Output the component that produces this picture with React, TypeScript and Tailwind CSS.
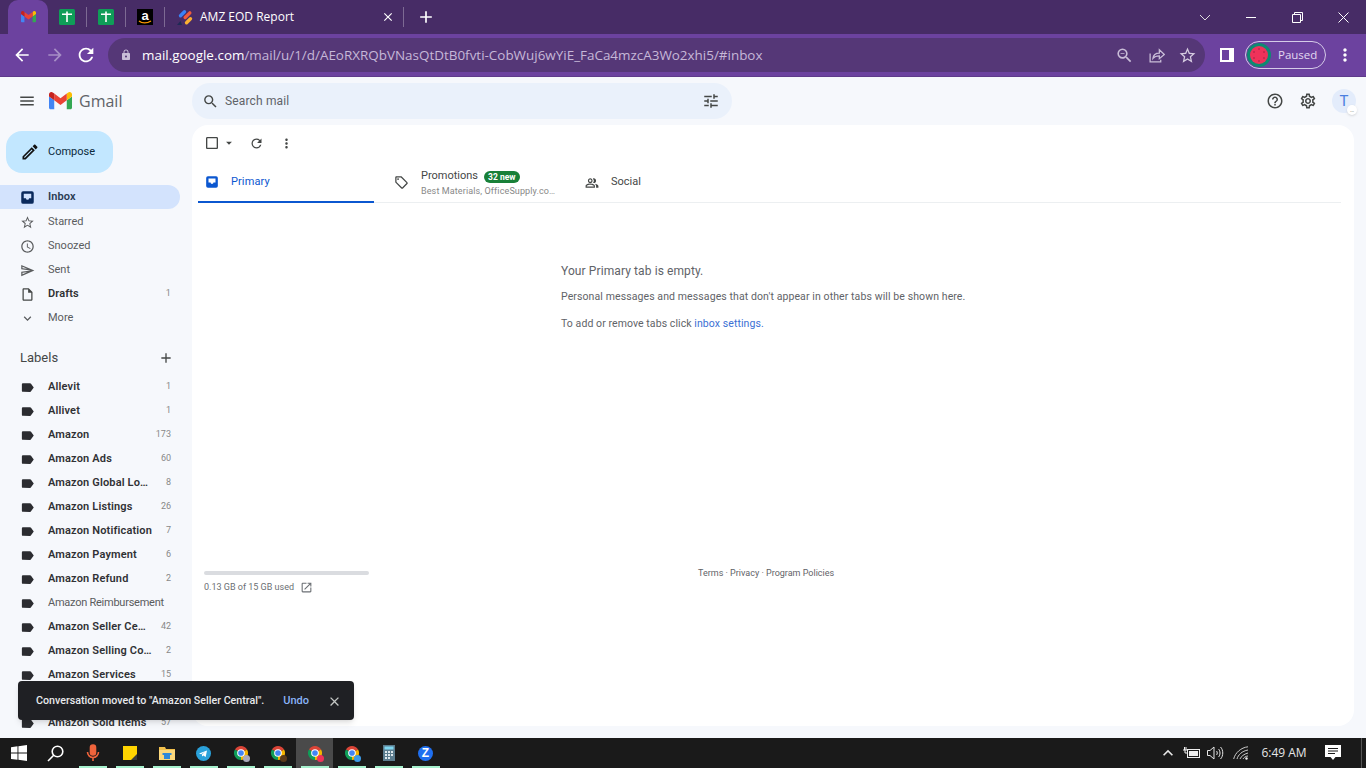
import React from "react";
import {
  MdMenu, MdSearch, MdTune, MdHelpOutline, MdOutlineSettings, MdStarBorder, MdAccessTime,
  MdOutlineSend, MdOutlineInsertDriveFile, MdExpandMore, MdAdd, MdLabel, MdCheckBoxOutlineBlank,
  MdArrowDropDown, MdRefresh, MdMoreVert, MdOutlineLocalOffer, MdOutlinePeopleAlt, MdOpenInNew,
  MdClose, MdOutlineEdit, MdLock, MdArrowBack, MdArrowForward, MdOutlineZoomOut,
  MdKeyboardArrowUp,
} from "react-icons/md";

function GmailLogo({ size }: { size: number }) {
  return (
    <svg width={size} height={(size * 66) / 88} viewBox="52 42 88 66">
      <path fill="#4285f4" d="M58 108h14V74L52 59v43c0 3.32 2.69 6 6 6" />
      <path fill="#34a853" d="M120 108h14c3.32 0 6-2.69 6-6V59l-20 15" />
      <path fill="#fbbc04" d="M120 48v26l20-15v-8c0-7.42-8.47-11.65-14.4-7.2" />
      <path fill="#ea4335" d="M72 74V48l24 18 24-18v26L96 92" />
      <path fill="#c5221f" d="M52 51v8l20 15V48l-5.6-4.2c-5.94-4.45-14.4-.22-14.4 7.2" />
    </svg>
  );
}

function InboxIcon({ size, color }: { size: number; color: string }) {
  return (
    <svg width={size} height={size} viewBox="0 0 24 24">
      <path
        fill={color}
        fillRule="evenodd"
        d="M5 2h14a3 3 0 0 1 3 3v14a3 3 0 0 1-3 3H5a3 3 0 0 1-3-3V5a3 3 0 0 1 3-3zM6 6v7h3.500a2.500 2.500 0 0 0 5 0H18V6z"
      />
    </svg>
  );
}

function ShareIcon() {
  return (
    <svg width="17" height="17" viewBox="0 0 24 24" fill="none" stroke="#c9bdd8" strokeWidth="1.8">
      <path d="M3 9v12h15v-3M7 16c.5-5 4-7.500 9-7.500V4l7 6.500-7 6V12.500c-4 0-7 1-9 3.500z" />
    </svg>
  );
}

function SheetIcon() {
  return (
    <svg width="16" height="16" viewBox="0 0 16 16">
      <rect width="16" height="16" rx="1.5" fill="#0f9d58" />
      <path d="M3 4.500h4.200V2.500h1.600v2H13v1.600H8.800V13H7.200V6.100H3z" fill="#fff" />
    </svg>
  );
}

function AmazonIcon() {
  return (
    <div className="relative flex h-4 w-4 items-start justify-center bg-black">
      <span className="font-['Liberation_Sans',sans-serif] text-[13px] leading-[13px] font-bold text-white">a</span>
      <svg className="absolute bottom-0 left-0" width="16" height="5" viewBox="0 0 16 5">
        <path d="M2 1c3 2.400 8 2.400 12 0" stroke="#f90" strokeWidth="1.4" fill="none" />
      </svg>
    </div>
  );
}

function EodIcon() {
  return (
    <svg width="17" height="17" viewBox="0 0 17 17">
      <rect x="2" y="3" width="9" height="3.400" rx="1.700" transform="rotate(-45 6.500 4.700)" fill="#3b82f6" />
      <rect x="6.500" y="4.500" width="10" height="3.400" rx="1.700" transform="rotate(-45 11.500 6.200)" fill="#ef5a3c" />
      <rect x="8" y="10" width="9" height="3.400" rx="1.700" transform="rotate(-45 12.500 11.700)" fill="#fbb131" />
      <path d="M1 16l3.500-4 1.500 4z" fill="#1e2a55" />
    </svg>
  );
}

function ChromeIcon({ dot }: { dot?: string }) {
  return (
    <div className="relative h-4 w-4">
      <svg width="16" height="16" viewBox="0 0 48 48">
        <path d="M24 24L5.800 13.500A21 21 0 0 1 42.200 13.500z" fill="#db4437" />
        <path d="M24 24L42.200 13.500A21 21 0 0 1 24 45z" fill="#f4b400" />
        <path d="M24 24L24 45A21 21 0 0 1 5.800 13.500z" fill="#0f9d58" />
        <circle cx="24" cy="24" r="11.500" fill="#fff" />
        <circle cx="24" cy="24" r="8.500" fill="#4285f4" />
      </svg>
      {dot ? <span className="absolute -right-[1px] -bottom-[1px] h-[7px] w-[7px] rounded-full" style={{ background: dot }} /> : null}
    </div>
  );
}

function Separator() {
  return <div className="h-[20px] w-px bg-[#7d6a93]" />;
}

function TabStrip() {
  return (
    <div className="flex h-[34px] shrink-0 items-center bg-[#472c66] pl-2 text-white">
      <div className="flex h-[34px] w-[40px] items-center justify-center rounded-t-[10px] bg-[#6c429f]">
        <GmailLogo size={15} />
      </div>
      <div className="flex w-[38px] justify-center"><SheetIcon /></div>
      <Separator />
      <div className="flex w-[38px] justify-center"><SheetIcon /></div>
      <Separator />
      <div className="flex w-[38px] justify-center"><AmazonIcon /></div>
      <Separator />
      <div className="flex w-[238px] items-center pl-[11px]">
        <EodIcon />
        <span className="ml-[7px] flex-1 font-['Open_Sans',sans-serif] text-[12px] text-white">AMZ EOD Report</span>
        <MdClose size={14} className="mr-[8px]" />
      </div>
      <Separator />
      <MdAdd size={20} className="ml-[12px] text-white" />
      <div className="flex-1" />
      <div className="flex items-center text-white">
        <div className="flex w-[46px] justify-center"><svg width="12" height="7" viewBox="0 0 12 7"><path d="M1 1l5 5 5-5" stroke="#ddd" fill="none" /></svg></div>
        <div className="flex w-[46px] justify-center"><div className="h-px w-[10px] bg-white" /></div>
        <div className="flex w-[46px] justify-center">
          <svg width="11" height="11" viewBox="0 0 11 11"><path d="M.5 2.500h8v8h-8zM2.500 2.500v-2h8v8h-2" fill="none" stroke="#fff" /></svg>
        </div>
        <div className="flex w-[46px] justify-center"><svg width="11" height="11" viewBox="0 0 11 11"><path d="M.5.5l10 10M10.500.5l-10 10" stroke="#fff" /></svg></div>
      </div>
    </div>
  );
}

function Watermelon() {
  return (
    <svg width="24" height="24" viewBox="0 0 24 24">
      <circle cx="12" cy="12" r="12" fill="#0d8a72" />
      <circle cx="12" cy="12" r="9" fill="#f0325a" />
      <g fill="#8f1a3c">
        <circle cx="12" cy="6" r=".7" /><circle cx="17" cy="9" r=".7" /><circle cx="17" cy="15" r=".7" />
        <circle cx="12" cy="18" r=".7" /><circle cx="7" cy="15" r=".7" /><circle cx="7" cy="9" r=".7" />
      </g>
    </svg>
  );
}

function Toolbar() {
  return (
    <div className="flex h-[43px] shrink-0 items-center border-b border-[#5e3a8a] bg-[#6c429f] pl-[12px]">
      <MdArrowBack size={20} className="text-white" />
      <MdArrowForward size={20} className="ml-[13px] text-[#a78fc6]" />
      <MdRefresh size={22} className="ml-[10px] text-white" />
      <div className="ml-[11px] flex h-[34px] w-[1097px] items-center rounded-full bg-[#553777] pl-[12px] pr-[8px]">
        <MdLock size={12} className="text-[#c9bdd8]" />
        <span className="ml-[10px] flex-1 truncate font-['Open_Sans',sans-serif] text-[13.45px] text-[#c6b8d8]">
          <span className="text-white">mail.google.com</span>/mail/u/1/d/AEoRXRQbVNasQtDtB0fvti-CobWuj6wYiE_FaCa4mzcA3Wo2xhi5/#inbox
        </span>
        <MdOutlineZoomOut size={19} className="-ml-[2px] text-[#c9bdd8]" />
        <div className="ml-[14px]"><ShareIcon /></div>
        <MdStarBorder size={19} className="ml-[13px] text-[#d5cbe0]" />
      </div>
      <div className="ml-[15px] flex h-[14px] w-[14px] items-center justify-start border-[2px] border-white bg-[#6c429f] pl-0">
        <div className="h-full w-[7px] bg-[#6c429f]" />
        <div className="h-full w-[3px] bg-white" />
      </div>
      <div className="ml-[11px] flex h-[28px] w-[81px] items-center rounded-full border border-[#d5cbe8] pl-px">
        <Watermelon />
        <span className="ml-[7px] font-['Open_Sans',sans-serif] text-[11.5px] text-[#e2d8f0]">Paused</span>
      </div>
      <MdMoreVert size={20} className="ml-[9px] text-white" />
    </div>
  );
}

const NAV = [
  { Icon: MdStarBorder, label: "Starred" },
  { Icon: MdAccessTime, label: "Snoozed" },
  { Icon: MdOutlineSend, label: "Sent" },
];

const LABELS: [string, string, boolean?][] = [
  ["Allevit", "1"],
  ["Allivet", "1"],
  ["Amazon", "173"],
  ["Amazon Ads", "60"],
  ["Amazon Global Lo…", "8"],
  ["Amazon Listings", "26"],
  ["Amazon Notification", "7"],
  ["Amazon Payment", "6"],
  ["Amazon Refund", "2"],
  ["Amazon Reimbursement", "", true],
  ["Amazon Seller Ce…", "42"],
  ["Amazon Selling Co…", "2"],
  ["Amazon Services", "15"],
  ["Amazon Sold Items", "57"],
];

function Sidebar() {
  return (
    <div className="h-full w-[192px] shrink-0 overflow-hidden">
      <div className="ml-[6px] mt-[6px] flex h-[42px] w-[107px] items-center rounded-2xl bg-[#c2e7ff] pl-[14px] text-[#0b2a3c]">
        <MdOutlineEdit size={20} className="text-[#111]" />
        <span className="ml-[8px] text-[11px]">Compose</span>
      </div>
      <div className="mt-[12px] flex h-[24px] w-[180px] items-center rounded-r-full bg-[#d3e3fd] pl-[20px] pt-px text-[11px] font-semibold tracking-[.1px] text-[#2a3a52]">
        <InboxIcon size={15} color="#0b2a5c" />
        <span className="ml-[13px]">Inbox</span>
      </div>
      {NAV.map(({ Icon, label }) => (
        <div key={label} className="flex h-[24px] items-center pl-[20px] pt-[2px] text-[11px] text-[#5a5c5e]">
          <Icon size={15} />
          <span className="ml-[13px]">{label}</span>
        </div>
      ))}
      <div className="flex h-[24px] w-[180px] items-center pl-[20px] pr-[9px] pt-[2px] text-[11px] font-semibold tracking-[.1px] text-[#303134]">
        <MdOutlineInsertDriveFile size={15} className="text-[#444746]" />
        <span className="ml-[13px] flex-1">Drafts</span>
        <span className="text-[9px] font-normal text-[#888]">1</span>
      </div>
      <div className="flex h-[24px] items-center pl-[20px] pt-[2px] text-[11px] text-[#5a5c5e]">
        <MdExpandMore size={15} />
        <span className="ml-[13px]">More</span>
      </div>
      <div className="mt-[17px] flex h-[24px] w-[180px] items-center justify-between pl-[20px] pr-[6px] text-[13px] text-[#444746]">
        <span>Labels</span>
        <MdAdd size={16} />
      </div>
      <div className="mt-[5px]">
        {LABELS.map(([name, count, plain]) => (
          <React.Fragment key={name}>
            {name === "Amazon Sold Items" ? <div className="h-[24px]" /> : null}
            <div className="flex h-[24px] w-[180px] items-center pl-[20px] pr-[9px] text-[11px] text-[#303134]">
              <MdLabel size={15} className="text-[#2b2c30]" />
              <span className={"ml-[13px] flex-1 whitespace-nowrap " + (plain ? "font-normal tracking-[-.25px] text-[#5a5c5e]" : "font-semibold tracking-[.15px]")}>{name}</span>
              <span className="text-[9px] text-[#888]">{count}</span>
            </div>
          </React.Fragment>
        ))}
      </div>
    </div>
  );
}

function MainPanel() {
  return (
    <div className="mb-[12px] mr-[12px] mt-0 flex flex-1 flex-col rounded-2xl bg-white pl-[6px] pr-[13px]">
      <div className="flex h-[36px] shrink-0 items-center pl-[6px] text-[#444746]">
        <MdCheckBoxOutlineBlank size={16} />
        <MdArrowDropDown size={14} className="ml-[2px]" />
        <MdRefresh size={15} className="ml-[13px]" />
        <MdMoreVert size={15} className="ml-[15px]" />
      </div>
      <div className="flex h-[42px] shrink-0 border-b border-[#eceff1]">
        <div className="flex h-[42px] w-[176px] items-center border-b-[2px] border-[#0b57d0] pl-[7px] pt-[2px] text-[11px] tracking-[.1px] text-[#0b57d0]">
          <InboxIcon size={14} color="#0b57d0" />
          <span className="ml-[12px]">Primary</span>
        </div>
        <div className="flex w-[191px] items-center pl-[20px] pt-[2px] text-[#444746]">
          <MdOutlineLocalOffer size={15} />
          <div className="ml-[12px]">
            <div className="flex items-center text-[11px]">
              <span>Promotions</span>
              <span className="ml-[6px] rounded-full bg-[#188038] px-[4px] text-[8.5px] leading-[12px] font-bold text-white">32 new</span>
            </div>
            <div className="mt-[1px] text-[9px] leading-[11px] tracking-[.12px] text-[#888]">Best Materials, OfficeSupply.co…</div>
          </div>
        </div>
        <div className="flex items-center pl-[20px] pt-[2px] text-[11px] text-[#444746]">
          <MdOutlinePeopleAlt size={14} />
          <span className="ml-[12px]">Social</span>
        </div>
      </div>
      <div className="ml-[363px] mt-[60px] text-[#5f6368]">
        <div className="text-[12px] leading-[16px] tracking-[.1px]">Your Primary tab is empty.</div>
        <div className="mt-[11px] text-[10.5px] leading-[14px] tracking-[.1px]">Personal messages and messages that don't appear in other tabs will be shown here.</div>
        <div className="mt-[13px] text-[10.5px] leading-[14px] tracking-[.08px]">To add or remove tabs click <span className="text-[#3b6fd4]">inbox settings.</span></div>
      </div>
      <div className="mt-[240px] flex pl-[6px]">
        <div className="w-[165px]">
          <div className="h-[4px] rounded-full bg-[#dadce0]" />
          <div className="mt-[6px] flex items-center text-[9px] text-[#6b6f74]">
            <span>0.13 GB of 15 GB used</span>
            <MdOpenInNew size={13} className="ml-[6px]" />
          </div>
        </div>
        <div className="ml-[329px] -mt-[4px] text-[9px] text-[#5f6368]">Terms · Privacy · Program Policies</div>
      </div>
    </div>
  );
}

function Gmail() {
  return (
    <div className="relative flex min-h-0 flex-1 flex-col overflow-hidden bg-[#f6f8fc] font-['Roboto',sans-serif]">
      <div className="flex h-[48px] shrink-0 items-center">
        <div className="flex w-[192px] items-center pl-[18px]">
          <MdMenu size={18} className="text-[#444746]" />
          <div className="ml-[13px]"><GmailLogo size={23} /></div>
          <span className="ml-[7px] font-['Open_Sans',sans-serif] text-[16px] text-[#5f6368]">Gmail</span>
        </div>
        <div className="flex h-[36px] w-[540px] items-center rounded-full bg-[#eaf1fb] pl-[10px] pr-[12px] text-[#444746]">
          <MdSearch size={17} />
          <span className="ml-[6px] flex-1 text-[12px] tracking-[.15px] text-[#5f6368]">Search mail</span>
          <MdTune size={18} />
        </div>
        <div className="flex-1" />
        <MdHelpOutline size={18} className="text-[#444746]" />
        <MdOutlineSettings size={18} className="ml-[15px] text-[#444746]" />
        <div className="relative ml-[15px] mr-[10px] flex h-[24px] w-[24px] items-center justify-center rounded-full bg-[#e3ecfb] text-[15px] text-[#4a7fe0]">
          T
          <span className="absolute -bottom-[2px] -right-[1px] flex h-[10px] w-[10px] items-center justify-center rounded-full bg-white text-[6px] leading-none text-[#555] shadow-sm">…</span>
        </div>
      </div>
      <div className="flex min-h-0 flex-1">
        <Sidebar />
        <MainPanel />
      </div>
      <div className="absolute left-[18px] top-[604px] flex h-[39px] w-[336px] items-center rounded-[4px] bg-[#1f2024] pl-[18px] pt-[1px] text-[10.7px] font-medium text-[#e8eaed] shadow-md">
        <span className="flex-1">Conversation moved to "Amazon Seller Central".</span>
        <span className="text-[11px] text-[#8ab4f8]">Undo</span>
        <MdClose size={15} className="ml-[18px] mr-[12px] text-[#c4c7c5]" />
      </div>
    </div>
  );
}

function TaskItem({ children, on, active }: { children: React.ReactNode; on?: boolean; active?: boolean }) {
  return (
    <div className={"relative flex h-[30px] w-[37px] items-center justify-center " + (active ? "bg-[#4a4a4a]" : "")}>
      {children}
      {on ? <span className="absolute bottom-0 left-[4.5px] h-[2px] w-[28px] bg-[#a6f1cd]" /> : null}
    </div>
  );
}

function Taskbar() {
  return (
    <div className="flex h-[30px] shrink-0 items-center bg-[#1a1a1a] text-white">
      <TaskItem>
        <svg width="16" height="16" viewBox="0 0 16 16" fill="#fff">
          <path d="M0 2.200l6.500-.9v6.300H0zM7.400 1.200L16 0v7.600H7.400zM0 8.500h6.500v6.300L0 13.900zM7.400 8.500H16V16l-8.600-1.200z" />
        </svg>
      </TaskItem>
      <TaskItem>
        <svg width="17" height="17" viewBox="0 0 17 17" fill="none" stroke="#fff" strokeWidth="1.6">
          <circle cx="10.500" cy="6.500" r="5.300" /><path d="M6.700 10.300L1 16" />
        </svg>
      </TaskItem>
      <TaskItem on>
        <svg width="14" height="18" viewBox="0 0 14 18" fill="none" stroke="#f0643c" strokeWidth="1.6">
          <rect x="4.500" y="1" width="5" height="10" rx="2.500" fill="#f0643c" /><path d="M1.500 8a5.500 5.500 0 0 0 11 0M7 13.500V17" />
        </svg>
      </TaskItem>
      <TaskItem on>
        <svg width="14" height="14" viewBox="0 0 14 14"><rect width="14" height="14" fill="#ffd400" /><path d="M8 14l6-6v6z" fill="#3a3a3a" /></svg>
      </TaskItem>
      <TaskItem on>
        <svg width="16" height="14" viewBox="0 0 16 14"><path d="M0 1h6l1 2h9v11H0z" fill="#f2c04c" /><rect y="4" width="16" height="10" fill="#fcd87c" /><rect x="5" y="8" width="6" height="5" fill="#2f88d8" /><rect x="3.500" y="7" width="9" height="2" fill="#2f88d8" /></svg>
      </TaskItem>
      <TaskItem on>
        <svg width="15" height="15" viewBox="0 0 15 15"><circle cx="7.500" cy="7.500" r="7.500" fill="#2aa1da" /><path d="M3 7.500l8-3-1.300 6.500-2.400-1.600-1.200 1.200-.2-2.100 3.200-2.700-4 2.400z" fill="#fff" /></svg>
      </TaskItem>
      <TaskItem on><ChromeIcon dot="#aab" /></TaskItem>
      <TaskItem on><ChromeIcon dot="#5a3a1a" /></TaskItem>
      <TaskItem on active><ChromeIcon dot="#f0325a" /></TaskItem>
      <TaskItem on><ChromeIcon dot="#3b9be8" /></TaskItem>
      <TaskItem on>
        <svg width="12" height="16" viewBox="0 0 12 16"><rect width="12" height="16" fill="#5b7c8e" /><rect x="1.500" y="1.500" width="9" height="3" fill="#7fd6f0" /><g fill="#dfe8ec"><rect x="2" y="6" width="2" height="2" /><rect x="5" y="6" width="2" height="2" /><rect x="8" y="6" width="2" height="2" /><rect x="2" y="9" width="2" height="2" /><rect x="5" y="9" width="2" height="2" /><rect x="8" y="9" width="2" height="2" /><rect x="2" y="12" width="2" height="2" /><rect x="5" y="12" width="2" height="2" /></g></svg>
      </TaskItem>
      <TaskItem on>
        <div className="flex h-[15px] w-[15px] items-center justify-center rounded-full bg-[#1f6ff0] font-['Liberation_Sans',sans-serif] text-[12px] font-bold text-white">Z</div>
      </TaskItem>
      <div className="flex-1" />
      <MdKeyboardArrowUp size={20} className="text-[#e6e6e6]" />
      <svg className="ml-[5px]" width="17" height="12" viewBox="0 0 17 12" fill="none" stroke="#eee">
        <rect x="4.500" y="2.500" width="12" height="8" /><rect x="6" y="4" width="9" height="5" fill="#eee" stroke="none" /><path d="M0 3h4M1.500 0v3M3 0v3M2 3v3h3" />
      </svg>
      <svg className="ml-[7px]" width="17" height="14" viewBox="0 0 17 14" fill="none" stroke="#e6e6e6">
        <path d="M.5 4.500h2.500l4-3.500v12l-4-3.500H.5zM9.500 5c1 1 1 3 0 4M11.500 3c2 2 2 6 0 8M13.500 1c3 3 3 9 0 12" />
      </svg>
      <svg className="ml-[9px]" width="16" height="14" viewBox="0 0 16 14" fill="none" stroke="#ccc">
        <path d="M.7 13C2 7 8 1.500 15 .8M4 13c1-4 5-8 11-9M7 13c1-2.500 4-5 8-6M10 13c.5-1 2.500-3 5-3" /><circle cx="13.500" cy="12.500" r="1.200" fill="#eee" stroke="none" />
      </svg>
      <span className="ml-[5px] w-[60px] text-center font-['Open_Sans',sans-serif] text-[12px] text-[#e6e6e6]">6:49 AM</span>
      <svg className="ml-[11px]" width="16" height="16" viewBox="0 0 16 16">
        <path d="M0 0h16v12h-5.500L8 15 5.500 12H0z" fill="#fff" /><path d="M3 3.500h10M3 6h10M3 8.500h7" stroke="#1a1a1a" />
      </svg>
      <div className="ml-[20px] mr-[4px] h-[30px] w-px bg-[#555]" />
    </div>
  );
}

export default function App() {
  return (
    <div className="flex h-screen w-full flex-col overflow-hidden">
      <TabStrip />
      <Toolbar />
      <Gmail />
      <Taskbar />
    </div>
  );
}
